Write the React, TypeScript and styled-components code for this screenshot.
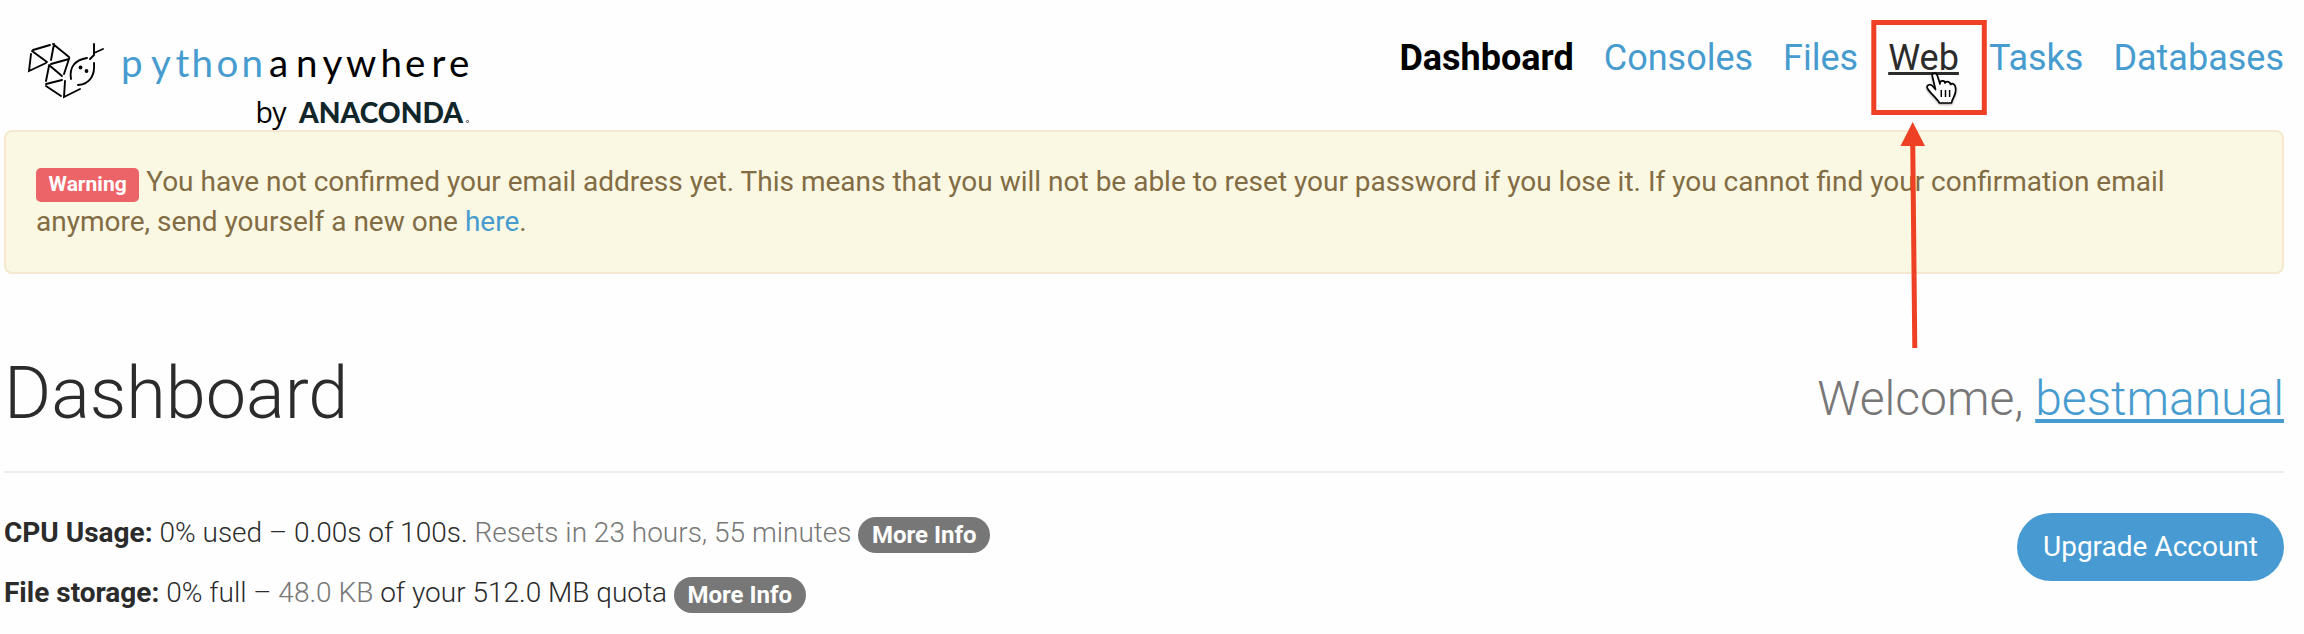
import React from 'react';
import styled, { createGlobalStyle } from 'styled-components';

const Global = createGlobalStyle`
  * { box-sizing: border-box; }
  html, body { margin: 0; background: #fefefe; }
  body { font-family: Roboto, "Liberation Sans", sans-serif; font-size: 28px; line-height: 40px; font-weight: 300; color: #2b2b2b; overflow: hidden; }
`;
const Page = styled.div`position: relative; width: 2304px; height: 634px; padding: 0 20px 0 4px;`;
const Header = styled.header`display: flex; justify-content: space-between; height: 130px;`;
const Logo = styled.svg`display: block; width: 480px; height: 130px; margin-left: -4px;`;
const Nav = styled.nav`display: flex; gap: 30px; padding-top: 33px; line-height: 50px;`;
const NavLink = styled.a<{ $state?: 'current' | 'hover' }>`
  font-size: 36px;
  font-weight: ${p => (p.$state === 'current' ? 700 : 400)};
  color: ${p => (p.$state === 'current' ? '#000' : p.$state === 'hover' ? '#2b2b2b' : '#479ccf')};
  text-decoration: ${p => (p.$state === 'hover' ? 'underline' : 'none')};
  text-decoration-thickness: 3px;
  text-underline-offset: 2px;
  text-decoration-skip-ink: none;
`;
const Alert = styled.div`height: 144px; padding: 30px; border: 2px solid #f5e8cf; border-radius: 8px; background: #faf7e3; color: #826c43; font-weight: 400;`;
const Label = styled.span`
  padding: 0.2em 0.6em 0.3em; border-radius: 5px; background: #ec6468; color: #fff;
  font-size: 21px; font-weight: 700; line-height: 1;
`;
const Link = styled.a`color: #479ccf;`;
const TitleRow = styled.div`display: flex; justify-content: space-between; align-items: baseline; height: 199px; padding-top: 80px; border-bottom: 2px solid #eee;`;
const Title = styled.h1`margin: 0; font-size: 72px; line-height: 80px; font-weight: 300;`;
const Welcome = styled.div`font-size: 48px; color: #777; margin-bottom: 3px; transform: translateY(-3px);`;
const UserLink = styled.a`color: #479ccf; text-decoration: underline; text-decoration-thickness: 4px; text-underline-offset: 4px;`;
const Stats = styled.div`display: flex; justify-content: space-between; align-items: flex-start; padding-top: 40px;`;
const Stat = styled.p`margin: 0 0 20px; height: 40px; white-space: nowrap;`;
const Strong = styled.b`font-weight: 700;`;
const Muted = styled.span`color: #777;`;
const Pill = styled.span`
  display: inline-block; padding: 6px 0; width: 132px; border-radius: 18px; background: #777; color: #fff;
  font-size: 24px; font-weight: 700; line-height: 24px; text-align: center; vertical-align: middle;
`;
const Upgrade = styled.button`
  width: 267px; height: 68px; padding: 0; border: 0; border-radius: 34px; background: #479bd2; color: #fff;
  font: 400 28px/66px Roboto, sans-serif; text-align: center;
`;
const Annotation = styled.svg`position: absolute; left: 1860px; top: 0; width: 140px; height: 360px;`;
const Pointer = styled.g`filter: drop-shadow(0 1.5px 1px rgba(0, 0, 0, 0.35));`;

const Brand = () => (
  <Logo viewBox="0 0 480 130">
    <g fill="none" stroke="#000" strokeWidth="1.9" strokeLinecap="round">
      <path d="M33 50L50 45M53 44L69 57M32 51L47 62M31 54L29 71L46 63M54 44L51 60M51 64L69 59L64 74M49 66L46 81M49 65L62 76M46 84L62 80M46 86L61 96M65 81L64 97L80 89" />
      <path d="M71 79C69 67 75 60 87 58M94 63C95 74 91 84 78 85" />
      <path d="M94 44V55L90 59M94 53L103 49" />
    </g>
    <circle cx="80.5" cy="67.5" r="1.9" />
    <circle cx="86.5" cy="71" r="1.9" />
    <g fontFamily="Lato, sans-serif" fontSize="38.5" fontWeight="400">
      <text fill="#479ccf" y="76.5" x="121 151 175.500 191.500 216.500 241.500">python</text>
      <text fill="#000" y="76.5" x="269 296 322.500 346 380.500 405 431.500 449">anywhere</text>
    </g>
    <text x="255.500" y="122.500" fontFamily="Open Sans" fontSize="28.5" fontWeight="400" textLength="31">by</text>
    <text x="299" y="122.500" fontFamily="Lato" fontSize="28.5" fontWeight="900" fill="#11262a" textLength="164" lengthAdjust="spacingAndGlyphs">ANACONDA</text>
    <circle cx="467.500" cy="121.500" r="1.1" fill="none" stroke="#444" strokeWidth="1" />
  </Logo>
);

export default function App() {
  return (
    <>
      <Global />
      <Page>
        <Header>
          <Brand />
          <Nav>
            <NavLink $state="current">Dashboard</NavLink>
            <NavLink>Consoles</NavLink>
            <NavLink>Files</NavLink>
            <NavLink $state="hover">Web</NavLink>
            <NavLink>Tasks</NavLink>
            <NavLink>Databases</NavLink>
          </Nav>
        </Header>
        <Alert>
          <Label>Warning</Label> You have not confirmed your email address yet. This means that you will not be able to reset your password if you lose it. If you cannot find your confirmation email anymore, send yourself a new one <Link>here</Link>.
        </Alert>
        <TitleRow>
          <Title>Dashboard</Title>
          <Welcome>Welcome, <UserLink>bestmanual</UserLink></Welcome>
        </TitleRow>
        <Stats>
          <div>
            <Stat><Strong>CPU Usage:</Strong> 0% used – 0.00s of 100s. <Muted>Resets in 23 hours, 55 minutes</Muted> <Pill>More Info</Pill></Stat>
            <Stat><Strong>File storage:</Strong> 0% full – <Muted>48.0 KB</Muted> of your 512.0 MB quota <Pill>More Info</Pill></Stat>
          </div>
          <Upgrade>Upgrade Account</Upgrade>
        </Stats>
        <Annotation viewBox="1860 0 140 360">
          <rect x="1873.800" y="22.500" width="110.500" height="90" fill="none" stroke="#ee4024" strokeWidth="5" />
          <path d="M1912.700 140L1914.800 348" stroke="#ee4024" strokeWidth="5" />
          <path d="M1912.700 122L1925 146H1900.500Z" fill="#ee4024" />
          <Pointer>
            <path d="M1932.500 77C1931 72.500 1936.500 72 1937.500 76L1940 84V82.500C1941 80 1945 80.500 1945 83C1946.500 80.500 1950.500 82 1950.500 84.500C1953 82.500 1955.500 85 1955.500 88C1957 95 1952 98 1951.500 103H1939.500C1936 97 1930 93 1927.500 88.500C1926 85 1930 83.500 1932.500 86L1935.500 89.500Z" fill="#fff" stroke="#000" strokeWidth="1.700" strokeLinejoin="round" />
            <path d="M1941.300 90V97M1945.500 90V97M1949.600 90V97" stroke="#000" strokeWidth="1.500" />
          </Pointer>
        </Annotation>
      </Page>
    </>
  );
}
